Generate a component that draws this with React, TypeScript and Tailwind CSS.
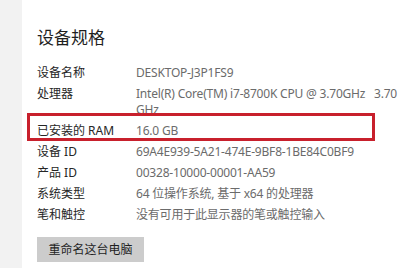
const rows: { label: string; value: React.ReactNode; mark?: boolean }[] = [
  { label: "设备名称", value: "DESKTOP-J3P1FS9" },
  {
    label: "处理器",
    value: (
      <>
        <span className="whitespace-pre">Intel(R) Core(TM) i7-8700K CPU @ 3.70GHz   3.70</span>
        <br />
        GHz
      </>
    ),
  },
  { label: "已安装的 RAM", value: "16.0 GB", mark: true },
  { label: "设备 ID", value: "69A4E939-5A21-474E-9BF8-1BE84C0BF9" },
  { label: "产品 ID", value: "00328-10000-00001-AA59" },
  { label: "系统类型", value: "64 位操作系统, 基于 x64 的处理器" },
  { label: "笔和触控", value: "没有可用于此显示器的笔或触控输入" },
];

export default function App() {
  return (
    <div className="flex h-[268px] w-[411px] overflow-hidden bg-white font-['Noto_Sans','Noto_Sans_CJK_SC',sans-serif]">
      <div className="w-[22px] shrink-0 bg-[#f2f2f2]" />
      <div className="flex flex-col pl-[15px] pt-[26px]">
        <h1 className="text-[17px] leading-[24px] text-[#1f1f1f]">设备规格</h1>

        <div className="mt-[12px] flex flex-col">
          {rows.map((r) => (
            <div key={r.label} className="relative flex py-[2.5px] text-[12px] leading-[16px]">
              <div className="w-[99px] shrink-0 text-[#262626]">{r.label}</div>
              <div className="tracking-[-0.2px] text-[#6b6b6b]">{r.value}</div>
              {r.mark && (
                <div className="pointer-events-none absolute -left-[10px] -top-[7px] h-[28px] w-[348px] border-[3px] border-[#c8202c]" />
              )}
            </div>
          ))}
        </div>

        <button className="mt-[12px] h-[25px] w-[107px] bg-[#cccccc] text-[12px] text-[#1f1f1f]">
          重命名这台电脑
        </button>
      </div>
    </div>
  );
}
